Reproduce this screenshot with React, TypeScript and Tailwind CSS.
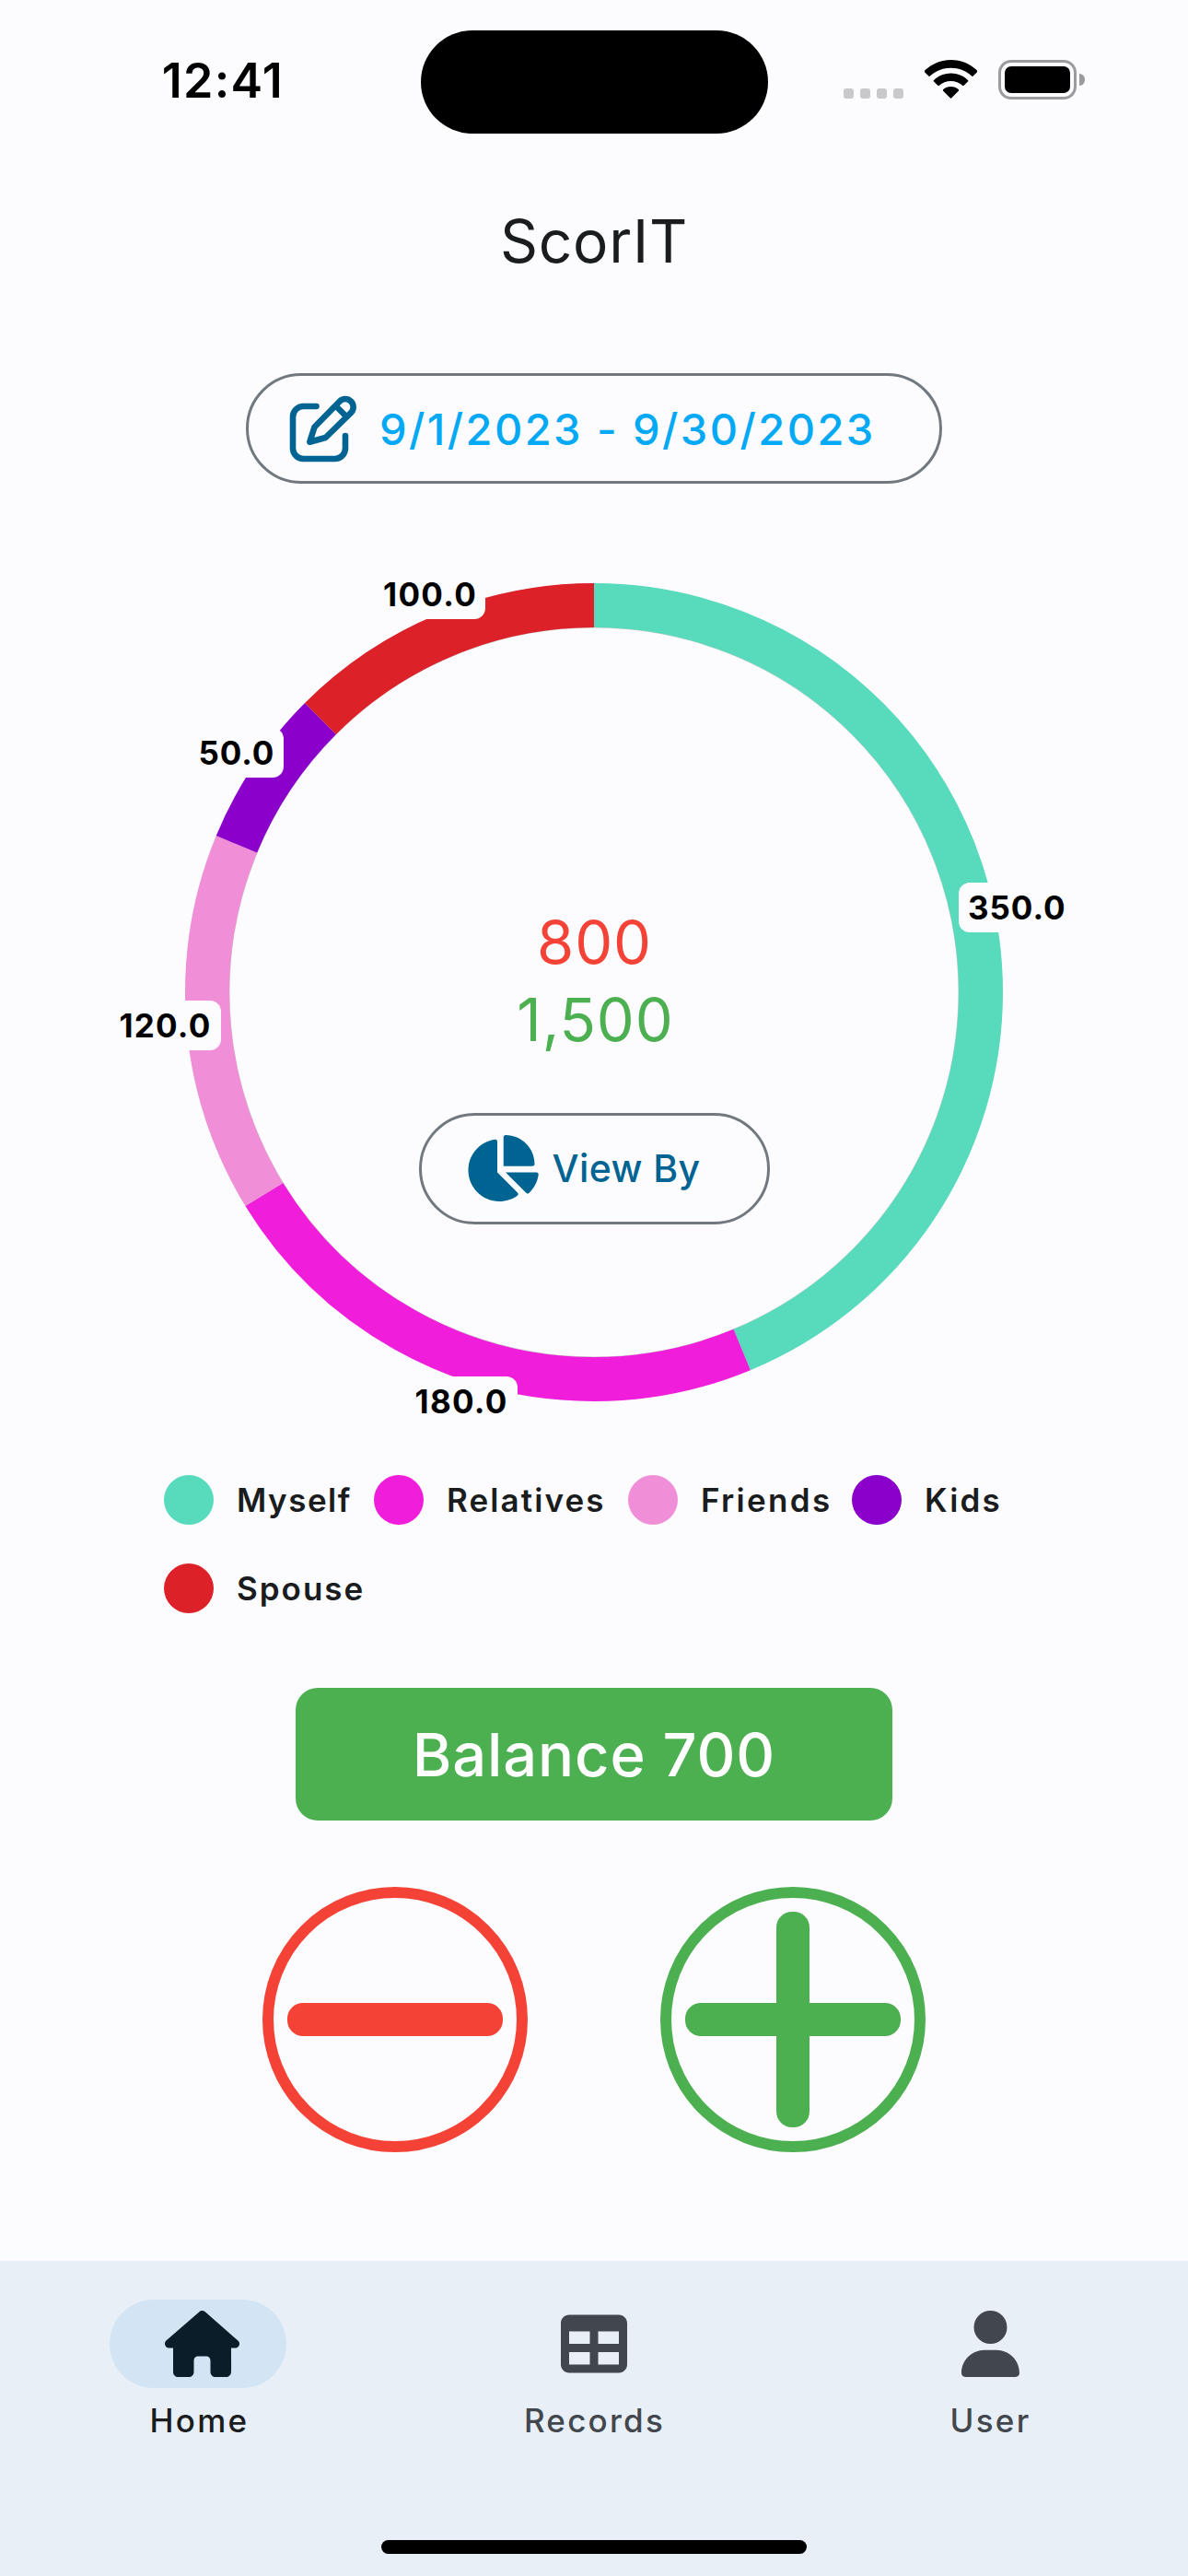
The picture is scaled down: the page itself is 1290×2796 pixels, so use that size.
import React from "react";
import { FaChartPie, FaHouse, FaTable, FaUser } from "react-icons/fa6";

const slices = [
  { name: "Myself", value: 350, color: "#58dbbc" },
  { name: "Relatives", value: 180, color: "#f01edb" },
  { name: "Friends", value: 120, color: "#f08fd8" },
  { name: "Kids", value: 50, color: "#8b00cb" },
  { name: "Spouse", value: 100, color: "#dc2128" },
];

const total = slices.reduce((sum, s) => sum + s.value, 0);

const valueLabels = [
  { text: "350.0", box: "left-[840px] top-[325px] w-[127px] tracking-[0.95px]" },
  { text: "180.0", box: "left-[239.5px] top-[861px] w-[121.5px] tracking-[1.3px]" },
  { text: "120.0", box: "left-[-81.5px] top-[453px] w-[120.5px] tracking-[1.2px]" },
  { text: "50.0", box: "left-[4.5px] top-[157px] w-[102.5px] tracking-[0.86px]" },
  { text: "100.0", box: "left-[205px] top-[-15px] w-[121.5px] tracking-[1.3px]" },
];

function StatusBar() {
  return (
    <header className="flex h-[177px] items-start pt-[33px] text-black">
      <div className="w-[456.5px] pl-[175.7px] text-[52px] font-semibold leading-[109px] tracking-[1.3px]">
        12:41
      </div>
      <div className="h-[111.5px] w-[377px] rounded-full bg-black" />
      <div className="flex pl-[82.5px] pt-[32px]">
        <div className="flex gap-[7px] pt-[31px]">
          {[0, 1, 2, 3].map((i) => (
            <div key={i} className="size-[11px] rounded-[3px] bg-[#c9c9cb]" />
          ))}
        </div>
        <svg className="ml-[23px] h-[42px] w-[57px]" viewBox="0 0 57 42">
          <path d="M28.500 0C39.600 0 49.700 4.400 57 11.600c.5.5.5 1.100 0 1.600l-4.300 4.300c-.5.5-1.100.5-1.600 0C45.200 12 37.200 8.800 28.500 8.800S11.800 12 5.900 17.500c-.5.5-1.100.5-1.600 0L0 13.200c-.5-.5-.5-1.100 0-1.600C7.300 4.400 17.400 0 28.500 0Z" />
          <path d="M28.500 14.500c7.200 0 13.700 2.800 18.500 7.400.5.5.5 1.100 0 1.600l-4.300 4.300c-.5.5-1.100.5-1.600 0-3.400-3-7.800-4.800-12.600-4.800s-9.200 1.800-12.600 4.800c-.5.5-1.100.5-1.600 0L10 23.500c-.5-.5-.5-1.100 0-1.600 4.800-4.600 11.300-7.400 18.500-7.400Z" />
          <path d="M28.500 29c3.200 0 6.100 1.200 8.300 3.100.5.5.5 1.100 0 1.600l-7.500 7.600c-.5.5-1.100.5-1.600 0l-7.500-7.600c-.5-.5-.5-1.100 0-1.600 2.200-1.900 5.100-3.100 8.300-3.100Z" />
        </svg>
        <div className="ml-[23px] h-[43px] w-[85px] rounded-[14px] border-[3px] border-[#9b9b9d] p-[4px]">
          <div className="size-full rounded-[7px] bg-black" />
        </div>
        <div className="ml-[3px] mt-[15px] h-[13px] w-[6px] rounded-r-full bg-[#9b9b9d]" />
      </div>
    </header>
  );
}

function EditIcon() {
  return (
    <svg
      className="mt-[2px] size-[78px]"
      viewBox="312 427 78 78"
      fill="none"
      stroke="#006493"
      strokeWidth="6.6"
      strokeLinecap="round"
      strokeLinejoin="round"
    >
      <path d="M343.500 441H329.500A11.500 11.500 0 0 0 318 452.500V486.500A11.500 11.500 0 0 0 329.500 498H363.500A11.500 11.500 0 0 0 375 486.500V473" />
      <path d="M336.300 479.700L341.500 463.500L368.700 435.700A8.600 8.600 0 0 1 381.200 447.900L353.500 475Z" />
      <path d="M365 441L375.500 451.500" />
    </svg>
  );
}

function DonutChart() {
  let offset = 0;
  return (
    <section className="relative ml-[200.5px] mt-[107.5px] size-[888px]">
      <svg className="size-full" viewBox="0 0 888 888" fill="none">
        <circle cx="444" cy="444" r="419.5" stroke="#cccccc" strokeWidth="48" />
        <g transform="rotate(-90 444 444)">
          {slices.map((s) => {
            const start = offset;
            offset += s.value;
            return (
              <circle
                key={s.name}
                cx="444"
                cy="444"
                r="420"
                stroke={s.color}
                strokeWidth="48"
                pathLength={total}
                strokeDasharray={`${s.value} ${total - s.value}`}
                strokeDashoffset={-start}
              />
            );
          })}
        </g>
      </svg>
      {valueLabels.map((l) => (
        <div
          key={l.text}
          className={`absolute h-[54px] rounded-[12px] bg-[#fcfcff] pl-[10.5px] text-[35px] font-bold leading-[54px] text-black ${l.box}`}
        >
          {l.text}
        </div>
      ))}
      <div className="absolute inset-0 flex flex-col items-center pt-[348px] text-[65px] leading-[84px]">
        <div className="pl-[2px] tracking-[0.9px] text-[#f44336]">800</div>
        <div className="pl-[4px] tracking-[0.9px] text-[#4caf50]">1,500</div>
        <button className="ml-px mt-[59.5px] flex h-[120.5px] w-[381px] items-center rounded-full border-[3px] border-[#71787e] pl-[46px] text-[41px] font-medium leading-none tracking-[0.4px] text-[#006493]">
          <FaChartPie className="h-[72px] w-[81px]" />
          <span className="ml-[15px]">View By</span>
        </button>
      </div>
    </section>
  );
}

function Legend() {
  const widths = [
    "w-[228px] tracking-[1.5px]",
    "w-[276px] tracking-[2.1px]",
    "w-[243px] tracking-[2.3px]",
    "w-[180px] tracking-[2.2px]",
    "w-[228px] tracking-[2px]",
  ];
  return (
    <section className="ml-[178px] mt-[80px] flex w-[933px] flex-wrap gap-y-[42px] text-[35px] font-semibold leading-[54px] text-[#1a1c1e]">
      {slices.map((s, i) => (
        <div key={s.name} className={`flex gap-[25px] ${widths[i]}`}>
          <span className="size-[54px] shrink-0 rounded-full" style={{ backgroundColor: s.color }} />
          <span>{s.name}</span>
        </div>
      ))}
    </section>
  );
}

function RoundButton({ plus }: { plus?: boolean }) {
  const color = plus ? "#4caf50" : "#f44336";
  return (
    <button className="size-[288px]">
      <svg className="size-full" viewBox="0 0 288 288">
        <circle cx="144" cy="144" r="138" fill="none" stroke={color} strokeWidth="12" />
        <rect x="27" y="126" width="234" height="36" rx="17" fill={color} />
        {plus && <rect x="126" y="27" width="36" height="234" rx="17" fill={color} />}
      </svg>
    </button>
  );
}

function NavBar() {
  return (
    <nav className="flex h-[342px] flex-col bg-[#e8eff6] text-[35px] font-medium leading-[42px] tracking-[2.25px] text-[#42474e]">
      <div className="grid h-[303px] grid-cols-3 pt-[42px]">
        <div className="flex flex-col items-center gap-[14px]">
          <div className="flex h-[96px] w-[192px] items-center rounded-full bg-[#d3e4f4] pl-[60px] text-[#0b1d29]">
            <FaHouse className="h-[72px] w-[81px]" />
          </div>
          <span className="pl-[3px] text-[#1a1c1e]">Home</span>
        </div>
        <div className="flex flex-col items-center gap-[14px]">
          <div className="flex h-[96px] items-center">
            <FaTable className="size-[72px]" />
          </div>
          <span className="pl-px">Records</span>
        </div>
        <div className="flex flex-col items-center gap-[14px]">
          <div className="flex h-[96px] items-center">
            <FaUser className="h-[72px] w-[63px]" />
          </div>
          <span className="pl-px">User</span>
        </div>
      </div>
      <div className="mx-auto h-[15px] w-[462px] rounded-full bg-black" />
    </nav>
  );
}

export default function App() {
  return (
    <div className="flex h-[2796px] w-[1290px] flex-col overflow-hidden whitespace-nowrap bg-[#fcfcff] font-['Inter',sans-serif]">
      <StatusBar />
      <h1 className="h-[168px] text-center text-[64px] font-normal leading-[169px] tracking-[0.75px] text-[#1a1c1e]">
        ScorIT
      </h1>
      <main className="h-[2109px]">
        <button className="mx-auto mt-[60px] flex h-[120px] w-[756px] items-center rounded-full border-[3px] border-[#71787e] pl-[42px] text-[47px] font-medium leading-none tracking-[2.42px] text-[#03a9f4]">
          <EditIcon />
          <span className="ml-[22px]">9/1/2023 - 9/30/2023</span>
        </button>
        <DonutChart />
        <Legend />
        <div className="mx-auto mt-[81px] h-[144px] w-[648px] rounded-[24px] bg-[#4caf50] text-center text-[65px] font-medium leading-[146px] tracking-[0.84px] text-white">
          Balance 700
        </div>
        <div className="mt-[72px] flex justify-center gap-[144px]">
          <RoundButton />
          <RoundButton plus />
        </div>
      </main>
      <NavBar />
    </div>
  );
}
